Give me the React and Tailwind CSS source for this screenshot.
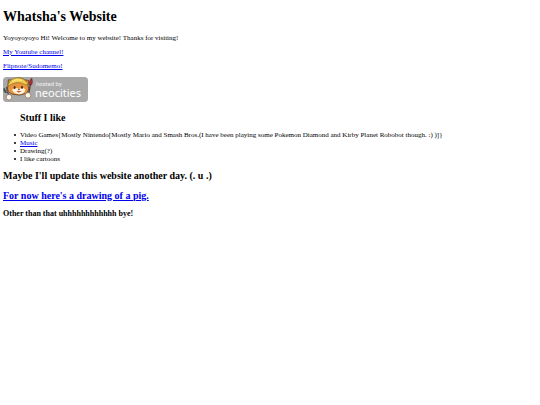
function NeocitiesBadge() {
  return (
    <svg viewBox="0 0 85 25" className="h-[25px] w-[85px]" role="img" aria-label="Hosted by Neocities">
      <rect x="0" y="0" width="85" height="25" rx="3.5" fill="#a9a9a9" />
      <path d="M5 8 5.3 2.8 10 3.2Q16 -1.2 22 3L25.5 3.4 25 9Q27 13.5 22.5 16.5 17 19.3 10 17.3 4 15.5 4.6 11Z" fill="#e9943f" stroke="#594022" strokeWidth="0.8" />
      <path d="M5.2 7.5Q8 .8 14.5 .8 21 .8 23.2 5L25.5 7.3Q22.5 8.4 19.5 6.4 13 3.8 5.2 9.2Z" fill="#f4cc4c" stroke="#80652a" strokeWidth="0.6" />
      <path d="M9 4.5Q14 1.5 19 3.4" fill="none" stroke="#fff0a2" strokeWidth="0.8" />
      <path d="M9 12.5Q13 9.5 16 12.2 19.5 9.8 22.4 12.4 21.5 17 16 17.2 10.5 17 9 12.5Z" fill="#fff0dc" />
      <ellipse cx="11.6" cy="10.6" rx="1" ry="1.5" fill="#42301f" />
      <ellipse cx="19" cy="10.2" rx="1" ry="1.5" fill="#42301f" />
      <path d="M14.6 12.2h2.5l-1.2 1.3Z" fill="#5b2e20" />
      <path d="M13.4 14.2Q16 16.8 18.5 14Z" fill="#b94d3a" />
      <path d="M.8 11.2 3 14.6M3.4 10 4.6 14M1 11.5Q1 16.5 4.4 15L6.4 19" fill="none" stroke="#4e4e4e" strokeWidth="1.3" />
      <path d="M25.6 17 27.4 7" stroke="#654235" strokeWidth="1.5" />
      <path d="M26.2 7.5Q25.9 3.2 28.8 .9 30.3 4.7 28.6 8Z" fill="#a52f32" stroke="#682d2c" strokeWidth="0.5" />
      <circle cx="6" cy="20.2" r="2.8" fill="#fff6e8" stroke="#74604c" strokeWidth="0.6" />
      <circle cx="25" cy="18.3" r="2.8" fill="#fff6e8" stroke="#74604c" strokeWidth="0.6" />
      <text x="33" y="9" fill="#f4f4f4" fontSize="6" fontFamily="Lato, sans-serif">hosted by</text>
      <text x="32" y="20" fill="#ffffff" fontSize="11" fontFamily="'Noto Sans', sans-serif">neocities</text>
    </svg>
  );
}

function ListItem({ children }) {
  return (
    <li className="flex items-center gap-[4px] before:size-[2px] before:shrink-0 before:rounded-full before:bg-black before:content-['']">
      <span>{children}</span>
    </li>
  );
}

export default function App() {
  const link = "text-[#0000ee] underline";
  return (
    <main className="bg-white px-[3px] pt-[9px] font-['Liberation_Serif',serif] text-[7px] leading-[8px] text-black">
      <h1 className="text-[14px] leading-[16px] font-bold">Whatsha's Website</h1>
      <p className="mt-[9px]">Yoyoyoyoyo Hi! Welcome to my website! Thanks for visiting!</p>
      <p className="mt-[6px]"><a href="#youtube" className={link}>My Youtube channel!</a></p>
      <p className="mt-[6px]"><a href="#flipnote" className={link}>Flipnote/Sudomemo!</a></p>
      <a href="#neocities" className="mt-[7px] block w-fit"><NeocitiesBadge /></a>
      <section className="pl-[11px]">
        <h2 className="mt-[10px] pl-[6px] text-[10px] leading-[12px] font-bold">Stuff I like</h2>
        <ul className="mt-[7px]">
          <ListItem>{"Video Games{Mostly Nintendo[Mostly Mario and Smash Bros.(I have been playing some Pokemon Diamond and Kirby Planet Robobot though. :) )]}"}</ListItem>
          <ListItem><a href="#music" className={link}>Music</a></ListItem>
          <ListItem>Drawing(?)</ListItem>
          <ListItem>I like cartoons</ListItem>
        </ul>
      </section>
      <h2 className="mt-[7px] text-[10px] leading-[12px] font-bold">Maybe I'll update this website another day. (. u .)</h2>
      <h2 className="mt-[8px] text-[10px] leading-[12px] font-bold"><a href="#pig" className={link}>For now here's a drawing of a pig.</a></h2>
      <h3 className="mt-[7px] text-[8px] leading-[10px] font-bold">Other than that uhhhhhhhhhhhh bye!</h3>
    </main>
  );
}
